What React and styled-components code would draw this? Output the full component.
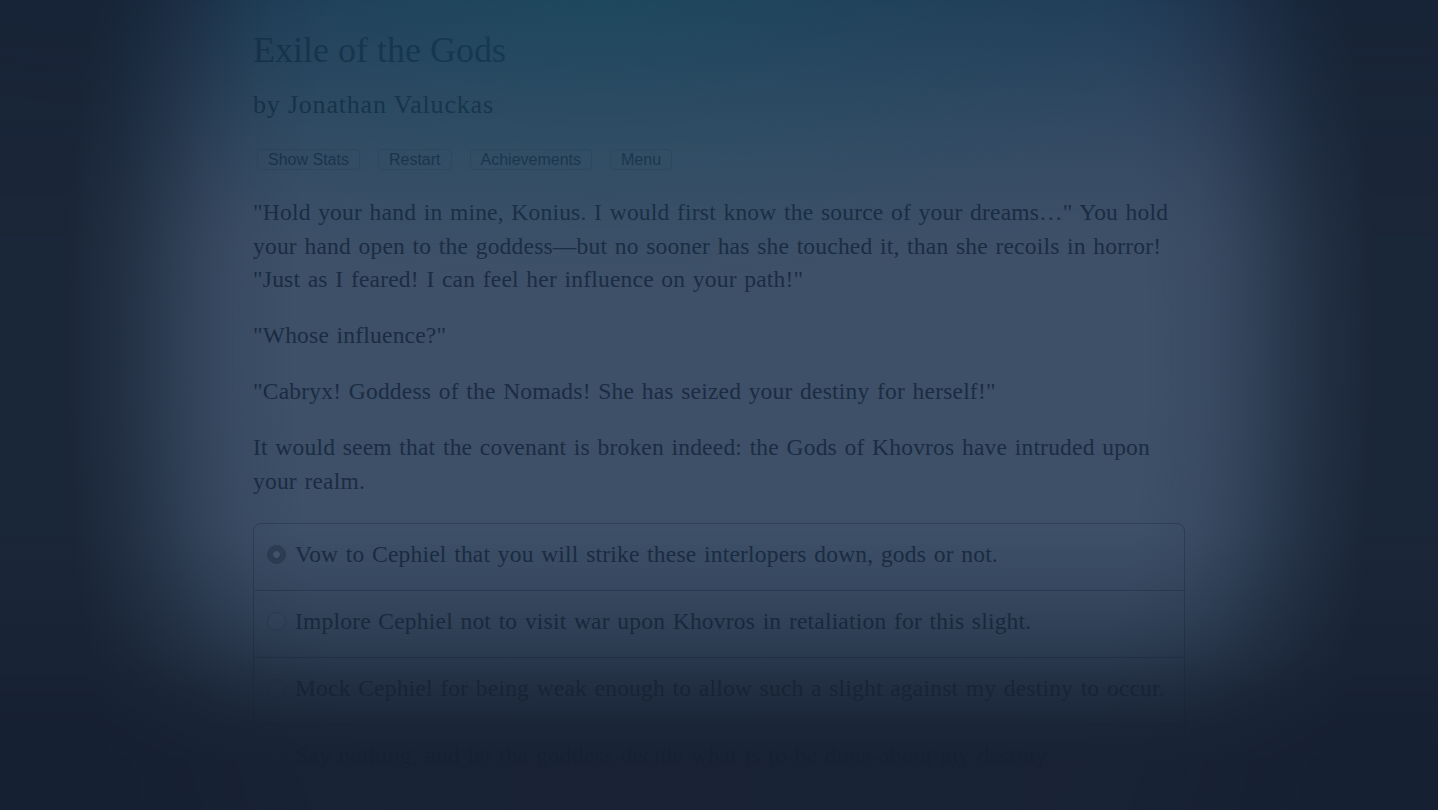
import React from 'react';
import styled, { createGlobalStyle } from 'styled-components';

const story = [
  `"Hold your hand in mine, Konius. I would first know the source of your dreams…" You hold your hand open to the goddess—but no sooner has she touched it, than she recoils in horror! "Just as I feared! I can feel her influence on your path!"`,
  `"Whose influence?"`,
  `"Cabryx! Goddess of the Nomads! She has seized your destiny for herself!"`,
  `It would seem that the covenant is broken indeed: the Gods of Khovros have intruded upon your realm.`,
];

const choices = [
  { id: 'vow', text: 'Vow to Cephiel that you will strike these interlopers down, gods or not.' },
  { id: 'implore', text: 'Implore Cephiel not to visit war upon Khovros in retaliation for this slight.' },
  { id: 'mock', text: 'Mock Cephiel for being weak enough to allow such a slight against my destiny to occur.' },
  { id: 'silent', text: 'Say nothing, and let the goddess decide what is to be done about my destiny.' },
];

const GlobalStyle = createGlobalStyle`
  html, body {
    margin: 0;
    height: 100%;
  }
  body {
    background: #3d5068;
    overflow: hidden;
  }
`;

const Page = styled.div`
  position: relative;
  min-height: 100vh;
`;

const Column = styled.main`
  width: 932px;
  margin: 0 auto;
  padding-top: 29px;
  font-family: 'Liberation Serif', 'Times New Roman', serif;
  color: #1b2c42;
`;

const Title = styled.h1`
  margin: 0;
  font-size: 36px;
  line-height: 42px;
  font-weight: 400;
`;

const Byline = styled.h2`
  margin: 19px 0 0;
  font-size: 26px;
  line-height: 30px;
  font-weight: 400;
  letter-spacing: 0.8px;
`;

const ButtonRow = styled.nav`
  display: flex;
  gap: 18px;
  margin-top: 29px;
  padding-left: 4px;
`;

const MetaButton = styled.button`
  height: 21px;
  padding: 0 10px;
  border: 1px solid #36495f;
  border-radius: 4px;
  background: #3d5068;
  color: #1d3148;
  font-family: 'Liberation Sans', Arial, sans-serif;
  font-size: 16px;
  line-height: 18px;
`;

const Story = styled.section`
  margin-top: 26px;
`;

const Para = styled.p`
  margin: 0 0 22.5px;
  font-size: 23.5px;
  line-height: 33.6px;
  letter-spacing: 0.2px;
  word-spacing: 1.5px;
`;

const ChoiceList = styled.form`
  margin-top: 24px;
  border: 1px solid #2f4057;
  border-radius: 8px;
`;

const ChoiceRow = styled.label`
  display: flex;
  align-items: center;
  gap: 9px;
  padding: 14px 14px 18.5px 13px;
  border-top: ${(p) => (p.$first ? 'none' : '1px solid #2f4057')};
  font-size: 23.5px;
  line-height: 33.6px;
  letter-spacing: 0.2px;
  word-spacing: 1.5px;
`;

const Radio = styled.span`
  flex: none;
  width: 19px;
  height: 19px;
  box-sizing: border-box;
  border-radius: 50%;
  border: 1px solid ${(p) => (p.$checked ? '#2d3e53' : '#34465c')};
  background: ${(p) =>
    p.$checked
      ? 'radial-gradient(circle, #485a70 0 3px, #2f4157 3.6px)'
      : '#3f526a'};
`;

// dim layer: bottom fade, side vignette, teal glow and dark band at the top
const Shade = styled.div`
  position: fixed;
  inset: 0;
  z-index: 1;
  pointer-events: none;
  background:
    linear-gradient(
      to bottom,
      rgba(22, 32, 50, 0) 530px,
      rgba(22, 32, 50, 0.1) 570px,
      rgba(22, 32, 50, 0.24) 610px,
      rgba(22, 32, 50, 0.44) 650px,
      rgba(22, 32, 50, 0.72) 690px,
      rgba(22, 32, 50, 0.88) 725px,
      rgba(22, 32, 50, 0.95) 760px
    ),
    radial-gradient(
      ellipse 650px 1100px at 720px 350px,
      rgba(22, 32, 50, 0) 66%,
      rgba(22, 32, 50, 0.1) 75%,
      rgba(22, 32, 50, 0.26) 81%,
      rgba(22, 32, 50, 0.5) 87.5%,
      rgba(22, 32, 50, 0.72) 94%,
      rgba(22, 32, 50, 0.88) 101%
    ),
    radial-gradient(
      ellipse 620px 280px at 600px 0px,
      rgba(20, 95, 105, 0.32),
      rgba(20, 95, 105, 0.12) 60%,
      rgba(20, 95, 105, 0)
    ),
    linear-gradient(
      to bottom,
      rgba(18, 48, 78, 0.6) 0px,
      rgba(18, 48, 78, 0.46) 50px,
      rgba(18, 48, 78, 0.3) 100px,
      rgba(18, 48, 78, 0.15) 160px,
      rgba(18, 48, 78, 0.05) 210px,
      rgba(18, 48, 78, 0) 250px
    );
`;

export default function App() {
  return (
    <Page>
      <GlobalStyle />
      <Column>
        <Title>Exile of the Gods</Title>
        <Byline>by Jonathan Valuckas</Byline>
        <ButtonRow>
          <MetaButton type="button">Show Stats</MetaButton>
          <MetaButton type="button">Restart</MetaButton>
          <MetaButton type="button">Achievements</MetaButton>
          <MetaButton type="button">Menu</MetaButton>
        </ButtonRow>
        <Story>
          {story.map((text, i) => (
            <Para key={i}>{text}</Para>
          ))}
        </Story>
        <ChoiceList>
          {choices.map((c, i) => (
            <ChoiceRow key={c.id} $first={i === 0}>
              <Radio $checked={i === 0} />
              <span>{c.text}</span>
            </ChoiceRow>
          ))}
        </ChoiceList>
      </Column>
      <Shade />
    </Page>
  );
}
